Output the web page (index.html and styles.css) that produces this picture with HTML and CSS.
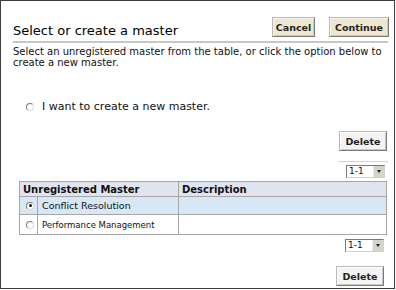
FILE: index.html
```html
<!DOCTYPE html>
<html>
<head>
<meta charset="utf-8">
<link rel="stylesheet" href="styles.css">
</head>
<body>
<div class="frame">
  <div class="header">
    <h1 class="title">Select or create a master</h1>
    <div class="actions">
      <button class="btn btn-beige btn-cancel">Cancel</button>
      <button class="btn btn-beige btn-continue">Continue</button>
    </div>
  </div>
  <div class="rule"></div>
  <p class="desc">Select an unregistered master from the table, or click the option below to create a new master.</p>
  <div class="option">
    <span class="radio"></span>
    <span class="option-label">I want to create a new master.</span>
  </div>
  <div class="row-right row-delete-top">
    <button class="btn btn-gray btn-delete">Delete</button>
  </div>
  <div class="row-right pager pager-top">
    <div class="select"><span class="select-text">1-1</span><span class="select-arrow"></span></div>
  </div>
  <table class="grid">
    <colgroup>
      <col class="c-radio">
      <col class="c-name">
      <col class="c-desc">
    </colgroup>
    <thead>
      <tr><th colspan="2">Unregistered Master</th><th>Description</th></tr>
    </thead>
    <tbody>
      <tr class="selected"><td class="col-radio"><span class="radio checked"></span></td><td class="cell-name">Conflict Resolution</td><td></td></tr>
      <tr class="row-tall"><td class="col-radio"><span class="radio"></span></td><td class="cell-name small">Performance Management</td><td></td></tr>
    </tbody>
  </table>
  <div class="row-right pager pager-bottom">
    <div class="select"><span class="select-text">1-1</span><span class="select-arrow"></span></div>
  </div>
  <div class="row-right row-delete-bottom">
    <button class="btn btn-gray btn-delete">Delete</button>
  </div>
</div>
</body>
</html>
```

FILE: styles.css
```css
html, body {
  margin: 0;
  padding: 0;
  background: #ffffff;
}
body {
  font-family: "DejaVu Sans", Verdana, sans-serif;
  color: #111;
}
.frame {
  box-sizing: border-box;
  width: 395px;
  height: 289px;
  border: 1px solid #3c3c3c;
  padding: 16px 0 0 12px;
  display: flex;
  flex-direction: column;
}
.header {
  display: flex;
  justify-content: space-between;
  align-items: flex-end;
  padding-right: 5px;
}
.title {
  margin: 0 0 -1px 0;
  font-size: 13px;
  line-height: 15px;
  font-weight: normal;
  color: #000;
}
.actions {
  display: flex;
  gap: 14px;
}
.btn {
  box-sizing: border-box;
  height: 20px;
  padding: 0;
  font-family: "DejaVu Sans", Verdana, sans-serif;
  font-weight: bold;
  font-size: 9.5px;
  color: #222;
  border: 1px solid;
  border-color: #b8b8b8 #7a7a7a #7a7a7a #b8b8b8;
  box-shadow: inset 1px 1px 0 #ffffff, inset -1px -1px 0 #c8c8c8;
}
.btn-beige {
  background: #efe6cf;
  box-shadow: inset 1px 1px 0 #fbf6ea, inset -1px -1px 0 #d6c9a8;
}
.btn-cancel { width: 43px; }
.btn-continue { width: 60px; }
.btn-gray {
  background: #f3f3f3;
}
.btn-delete { width: 48px; }
.rule {
  margin: 4px 6px 0 0;
  border-top: 2px solid #c6c6c6;
}
.desc {
  margin: 3px 0 0 0;
  font-size: 10px;
  line-height: 11px;
  width: 372px;
}
.option {
  display: flex;
  align-items: center;
  margin: 32px 0 0 13px;
  height: 13px;
}
.option-label {
  font-size: 11px;
  line-height: 13px;
  margin-left: 8px;
}
.radio {
  box-sizing: border-box;
  display: inline-block;
  width: 8px;
  height: 8px;
  border-radius: 50%;
  border: 1px solid;
  border-color: #7c7c7c #d8d8d8 #d8d8d8 #7c7c7c;
  background: #fff;
  position: relative;
}
.radio.checked::after {
  content: "";
  position: absolute;
  left: 1.5px;
  top: 1.5px;
  width: 3px;
  height: 3px;
  border-radius: 50%;
  background: #111;
}
.row-right {
  display: flex;
  justify-content: flex-end;
}
.row-delete-top {
  margin-top: 18px;
  padding-right: 7px;
}
.pager {
  box-sizing: border-box;
}
.pager-top {
  margin: 10px 6px 0 325px;
  border-top: 1px solid #d4d4d4;
  padding: 3px 3px 3px 0;
}
.pager-bottom {
  margin: 4px 6px 0 325px;
  padding: 0 4px 0 0;
}
.select {
  box-sizing: border-box;
  display: flex;
  align-items: center;
  width: 39px;
  height: 13px;
  border: 1px solid;
  border-color: #7a7a7a #d0d0d0 #d0d0d0 #7a7a7a;
  background: #fff;
}
.select-text {
  flex: 1;
  font-size: 9px;
  line-height: 11px;
  padding-left: 2px;
  color: #111;
}
.select-arrow {
  box-sizing: border-box;
  width: 11px;
  height: 11px;
  background: #d6d3cc;
  border-left: 1px solid #eee;
  position: relative;
}
.select-arrow::after {
  content: "";
  position: absolute;
  left: 3px;
  top: 4px;
  border-left: 2.5px solid transparent;
  border-right: 2.5px solid transparent;
  border-top: 3px solid #222;
}
.grid {
  margin: 0 0 0 6px;
  width: 368px;
  border-collapse: collapse;
  table-layout: fixed;
  border: 1px solid #a6a6a6;
}
.c-radio { width: 18px; }
.c-name { width: 141px; }
.grid th, .grid td {
  border: 1px solid #a6a6a6;
  padding: 0 0 0 4px;
  text-align: left;
  white-space: nowrap;
  overflow: hidden;
}
.grid th {
  background: #e0e4ee;
  font-size: 10px;
  font-weight: bold;
  height: 13px;
  line-height: 13px;
  color: #111;
  padding-top: 1px;
  padding-left: 3px;
}
.grid td {
  height: 17px;
  font-size: 9.5px;
  color: #111;
}
.grid tr.row-tall td {
  height: 19px;
}
.grid td.col-radio {
  padding: 0 0 0 6px;
}
.grid td.col-radio .radio {
  display: block;
}
.grid td.small {
  font-size: 8.5px;
}
.grid tr.selected td {
  background: #d7e7f6;
}
.row-delete-bottom {
  margin-top: 14px;
  padding-right: 10px;
}
```
